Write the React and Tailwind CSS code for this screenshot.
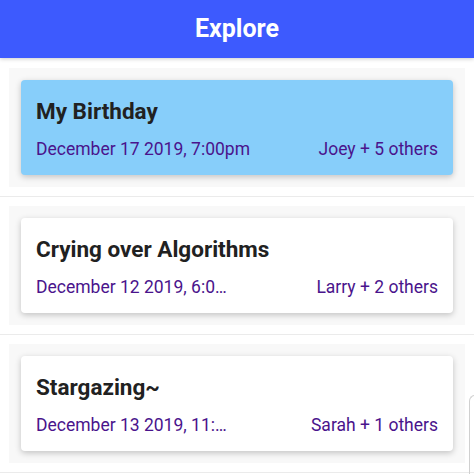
const events = [
  { title: 'My Birthday', date: 'December 17 2019, 7:00pm', people: 'Joey + 5 others', active: true },
  { title: 'Crying over Algorithms', date: 'December 12 2019, 6:0…', people: 'Larry + 2 others' },
  { title: 'Stargazing~', date: 'December 13 2019, 11:…', people: 'Sarah + 1 others' },
];

function EventCard({ event }) {
  return (
    <div className="pt-[9px] pb-[9px] border-b border-[#ebebeb]">
      <div className="mx-[9px] p-3 bg-[#f8f8f8]">
        <div
          className={[
            'rounded-sm shadow-[0_2px_6px_rgba(0,0,0,0.22)] px-[15px] pt-[18px] pb-[14px]',
            event.active ? 'bg-[#87cefa]' : 'bg-white',
          ].join(' ')}
        >
          <h2 className="text-[22.5px] leading-[26px] font-bold text-[#212121]">{event.title}</h2>
          <div className="mt-[13px] flex justify-between text-[17.5px] leading-6 text-[#4a148c]">
            <span>{event.date}</span>
            <span>{event.people}</span>
          </div>
        </div>
      </div>
    </div>
  );
}

export default function App() {
  return (
    <div className="relative w-[474px] h-[474px] overflow-hidden bg-white font-['Roboto',sans-serif]">
      <header className="h-[58px] bg-[#3d5afe] flex items-center justify-center shadow-[0_1px_4px_rgba(0,0,0,0.2)] relative z-10">
        <h1 className="text-[25px] font-bold text-white">Explore</h1>
      </header>
      <div className="pt-px">
        {events.map((e) => (
          <EventCard key={e.title} event={e} />
        ))}
      </div>
      <div className="absolute left-[469px] top-[395px] w-3 h-24 border-l border-t border-[#d0d0d0] rounded-tl-md" />
    </div>
  );
}
